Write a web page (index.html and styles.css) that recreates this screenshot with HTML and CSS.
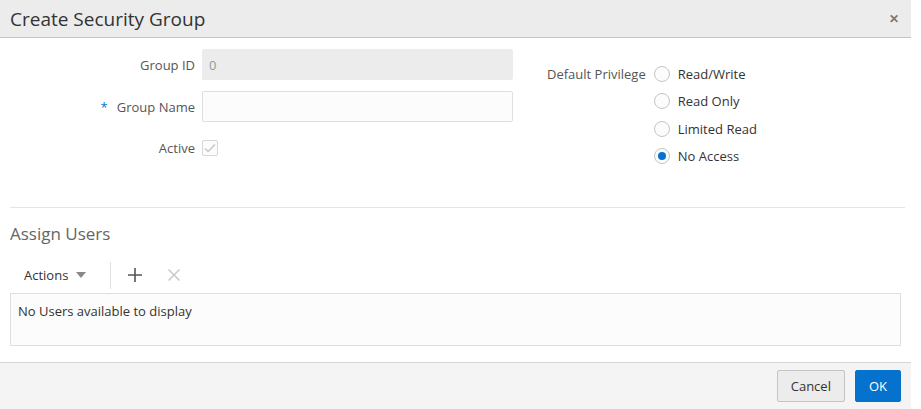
FILE: index.html
```html
<!DOCTYPE html>
<html lang="en">

<head>
  <meta charset="UTF-8">
  <meta name="viewport" content="width=device-width, initial-scale=1.0">
  <title>Create Security Group</title>
  <link rel="stylesheet" href="styles.css">
</head>

<body>
  <div class="dialog">
    <header class="dialog-header">
      <h1>Create Security Group</h1>
      <span class="close">&#x2715;</span>
    </header>

    <div class="dialog-body">
      <div class="form">
        <div class="form-left">
          <div class="row">
            <label class="label">Group ID</label>
            <input class="text-input readonly" type="text" value="0" readonly>
          </div>
          <div class="row">
            <label class="label"><span class="required">*</span>Group Name</label>
            <input class="text-input" type="text">
          </div>
          <div class="row row-check">
            <label class="label">Active</label>
            <span class="checkbox">
              <svg width="12" height="10" viewBox="0 0 12 10"><path d="M1 5.5 L4.2 8.5 L11 1.5" fill="none" stroke="#c8c8c8" stroke-width="1.6"/></svg>
            </span>
          </div>
        </div>

        <div class="form-right">
          <span class="label">Default Privilege</span>
          <div class="radios">
            <div class="radio-item"><span class="radio"></span>Read/Write</div>
            <div class="radio-item"><span class="radio"></span>Read Only</div>
            <div class="radio-item"><span class="radio"></span>Limited Read</div>
            <div class="radio-item"><span class="radio checked"></span>No Access</div>
          </div>
        </div>
      </div>

      <hr class="divider">

      <h2 class="section-title">Assign Users</h2>

      <div class="toolbar">
        <span class="actions">Actions <span class="caret"></span></span>
        <span class="tool-sep"></span>
        <svg class="tool-icon" width="16" height="16" viewBox="0 0 16 16"><path d="M8 1 V15 M1 8 H15" stroke="#555" stroke-width="1.6"/></svg>
        <svg class="tool-icon" width="14" height="14" viewBox="0 0 14 14"><path d="M1.5 1.5 L12.5 12.5 M12.5 1.5 L1.5 12.5" stroke="#c9c9c9" stroke-width="1.5"/></svg>
      </div>

      <div class="table-box">No Users available to display</div>
    </div>

    <footer class="dialog-footer">
      <button class="btn">Cancel</button>
      <button class="btn btn-primary">OK</button>
    </footer>
  </div>
</body>

</html>
```

FILE: styles.css
```css
body {
  margin: 0;
  background-color: #fff;
  font-family: "Open Sans", "Noto Sans", sans-serif;
  font-size: 13px;
  color: #333;
}

.dialog {
  width: 911px;
  height: 409px;
  display: flex;
  flex-direction: column;
  background-color: #fff;
}

.dialog-header {
  height: 38px;
  box-sizing: border-box;
  background-color: #ececec;
  border-bottom: 1px solid #c4c4c4;
  display: flex;
  align-items: center;
  justify-content: space-between;
  padding: 0 12px 0 10px;
}

.dialog-header h1 {
  margin: 0;
  font-size: 19px;
  font-weight: normal;
  color: #333;
}

.close {
  font-size: 12px;
  font-weight: bold;
  color: #777;
}

.dialog-body {
  flex-grow: 1;
  min-height: 0;
  padding: 11px 10px 0 10px;
}

.form {
  display: flex;
}

.form-left {
  width: 503px;
  display: flex;
  flex-direction: column;
  gap: 11px;
}

.row {
  display: flex;
  align-items: center;
}

.label {
  color: #555;
  text-align: right;
}

.form-left .label {
  width: 192px;
  padding-right: 7px;
  box-sizing: border-box;
}

.required {
  color: #0572ce;
  margin-right: 9px;
}

.text-input {
  width: 311px;
  height: 31px;
  box-sizing: border-box;
  border: 1px solid #dfdfdf;
  border-radius: 2px;
  background-color: #fcfcfc;
  padding: 0 6px;
  font-family: inherit;
  font-size: 13px;
  color: #999;
}

.text-input.readonly {
  background-color: #ececec;
  border-color: #ececec;
}

.row-check {
  margin-top: 6px;
}

.checkbox {
  width: 16px;
  height: 16px;
  box-sizing: border-box;
  border: 1px solid #d6d6d6;
  border-radius: 2px;
  background-color: #fcfcfc;
  display: flex;
  align-items: center;
  justify-content: center;
}

.form-right {
  display: flex;
  margin-left: 34px;
  margin-top: 16px;
}

.form-right .label {
  margin-right: 8px;
}

.radios {
  display: flex;
  flex-direction: column;
  gap: 9.4px;
}

.radio-item {
  display: flex;
  align-items: center;
  height: 18px;
  color: #333;
}

.radio {
  width: 16px;
  height: 16px;
  box-sizing: border-box;
  border: 1px solid #c4c4c4;
  border-radius: 50%;
  background-color: #fcfcfc;
  margin-right: 8px;
  position: relative;
}

.radio.checked::after {
  content: "";
  position: absolute;
  left: 3px;
  top: 3px;
  width: 8px;
  height: 8px;
  border-radius: 50%;
  background-color: #0572ce;
}

.divider {
  border: none;
  border-top: 1px solid #e5e5e5;
  margin: 42px 0 0 0;
  width: 895px;
}

.section-title {
  margin: 14px 0 0 0;
  font-size: 17px;
  font-weight: normal;
  color: #666;
}

.toolbar {
  display: flex;
  align-items: center;
  height: 30px;
  margin-top: 15px;
  padding-left: 14px;
}

.actions {
  color: #333;
  display: flex;
  align-items: center;
}

.caret {
  display: inline-block;
  width: 0;
  height: 0;
  border-left: 5px solid transparent;
  border-right: 5px solid transparent;
  border-top: 6px solid #888;
  margin-left: 8px;
}

.tool-sep {
  width: 1px;
  height: 27px;
  background-color: #dfdfdf;
  margin: 0 16px 0 24px;
}

.tool-icon {
  margin-right: 24px;
}

.table-box {
  width: 891px;
  height: 53px;
  box-sizing: border-box;
  border: 1px solid #dfdfdf;
  background-color: #fcfcfc;
  padding: 8px 7px;
  margin-top: 3px;
  color: #333;
}

.dialog-footer {
  height: 47px;
  flex-shrink: 0;
  box-sizing: border-box;
  border-top: 1px solid #d6d6d6;
  background-color: #f4f4f4;
  display: flex;
  align-items: center;
  justify-content: flex-end;
  gap: 10px;
  padding: 0 10px 0 0;
}

.btn {
  height: 32px;
  padding: 0 13px;
  border: 1px solid #c4c4c4;
  border-radius: 2px;
  background-color: #ececec;
  font-family: inherit;
  font-size: 13px;
  color: #333;
}

.btn-primary {
  background-color: #0572ce;
  border-color: #0572ce;
  color: #fff;
}
```
